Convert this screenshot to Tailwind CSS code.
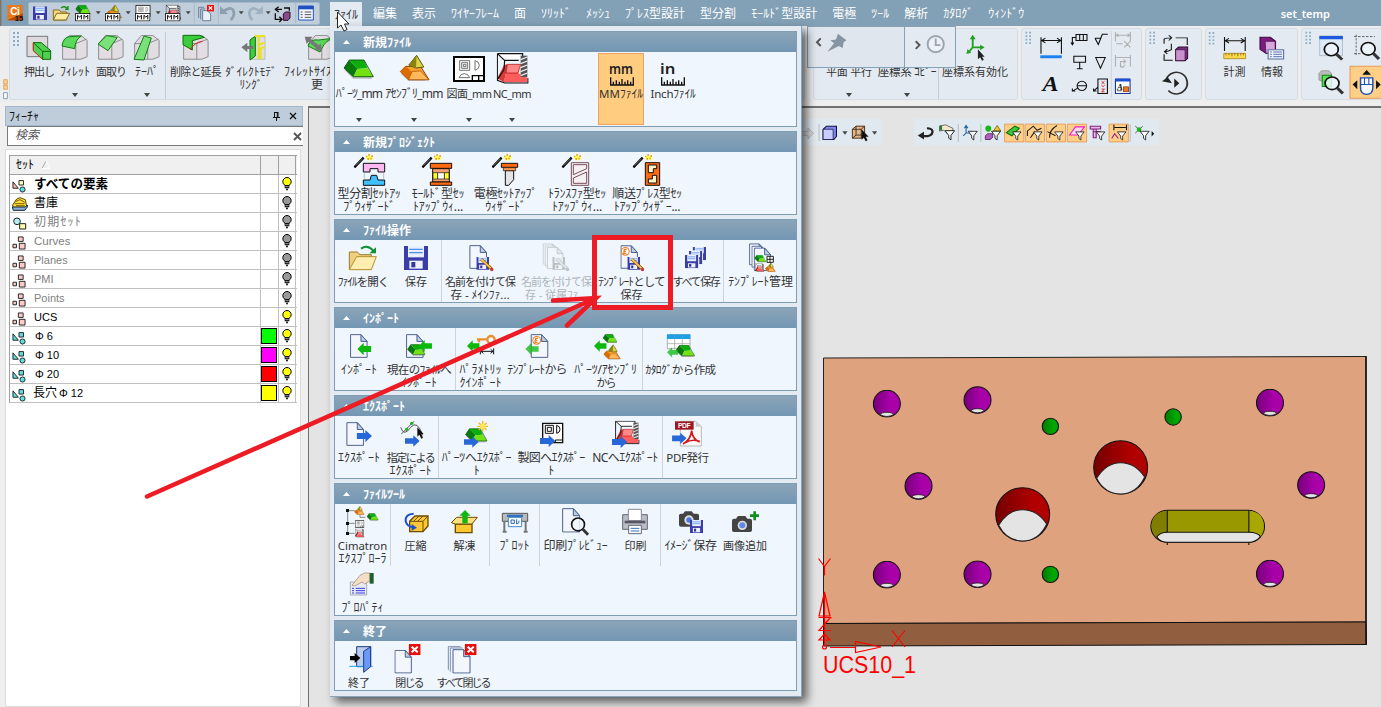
<!DOCTYPE html>
<html lang="ja">
<head>
<meta charset="utf-8">
<title>set_temp</title>
<script src="https://cdn.jsdelivr.net/npm/@tailwindcss/browser@4"></script>
</head>
<body class="relative flex h-[707px] w-[1381px] flex-col overflow-hidden bg-[#efefef] font-['Noto_Sans','Noto_Sans_CJK_JP',sans-serif] text-[12px] leading-[13px] text-[#333]">

<svg class="absolute h-0 w-0">
  <symbol id="part" viewBox="-2 -2 92 60"><path d="M0 30L28 57H82L88 50" fill="#999" opacity=".6"/><path d="M0 25L16 1 40 27 28 51Z" fill="#067a0a"/><path d="M16 1H60L71 26 40 28Z" fill="#0cae0c"/><path d="M40 28L71 26 88 51H28Z" fill="#73e210"/><path d="M0 25L16 1H60L88 51H28Z" fill="none" stroke="#064d08" stroke-width="2.5"/></symbol>
  <symbol id="asm" viewBox="-2 -2 92 82"><path d="M0 55L24 78H82" fill="#999" opacity=".6"/><path d="M0 50L16 34H62L88 75H25Z" fill="#f8a030" stroke="#8a3c00" stroke-width="3"/><path d="M0 50L16 34 36 52 25 75Z" fill="#dc6c00"/><path d="M36 50L62 48 88 75H25Z" fill="#ffb95a" stroke="#a04c00" stroke-width="2"/><path d="M50 0L26 30 48 39 72 36Z" fill="#ddd34a" stroke="#5a5200" stroke-width="3"/><path d="M50 0L26 30 48 39Z" fill="#8c8410"/></symbol>
  <symbol id="drawing" viewBox="0 0 96 78"><path d="M3 3H93V75H3Z" fill="#fff" stroke="#000" stroke-width="6"/><path d="M20 14H50V43H20ZM26 20H44V37H26ZM31 25H39V32H31ZM66 14V43Q80 38 79 28 78 16 66 14ZM18 65Q22 53 34 53 46 53 50 65Z" fill="none" stroke="#555" stroke-width="2.5"/><path d="M58 75V59H93M77 59V75" fill="none" stroke="#000" stroke-width="4"/></symbol>
  <symbol id="nc" viewBox="0 0 96 94"><path d="M2 76L22 36 32 34 28 60 22 88Z" fill="#d83838"/><path d="M28 60L64 60 92 74V88H20Z" fill="#ff5c5c"/><path d="M32 34H72L64 60H28Z" fill="#ff8888" stroke="#a00" stroke-width="2"/><path d="M2 2H72L66 22H24Z" fill="#fff"/><path d="M2 2H78V20M2 2V82L24 90H94V75M2 2L24 22H66M24 22L22 50 2 80" fill="none" stroke="#111" stroke-width="3.5"/><rect x="72" y="8" width="20" height="64" fill="#555"/><path d="M72 20L92 12M72 32L92 24M72 44L92 36M72 56L92 48M72 68L92 60" stroke="#eee" stroke-width="4"/></symbol>
  <symbol id="page" viewBox="0 0 56 74"><path d="M2 2H34L53 23V72H2Z" fill="#f3f7fd" stroke="#4a5f8a" stroke-width="3"/><path d="M34 2V23H53Z" fill="#b9cce8" stroke="#4a5f8a" stroke-width="3"/></symbol>
  <symbol id="gleft" viewBox="0 0 42 38"><path d="M0 19L19 0V10H42V28H19V38Z" fill="#0cb80c"/></symbol>
  <symbol id="bright" viewBox="0 0 46 36"><path d="M46 18L26 0V9H0V27H26V36Z" fill="#2767d8"/></symbol>
  <symbol id="floppy" viewBox="0 0 72 72"><path d="M0 0H72V72H0Z" fill="#3a3da8"/><path d="M12 0H60V34H12Z" fill="#e8f0ff"/><path d="M16 10H56M16 20H56" stroke="#4d8be8" stroke-width="4"/><path d="M16 44H56V68H16Z" fill="#eef0fa"/><path d="M22 48H34V64H22Z" fill="#34389c"/></symbol>
  <symbol id="pencil" viewBox="0 0 44 44"><path d="M3 3L37 35" stroke="#7a4a00" stroke-width="10"/><path d="M3 3L35 33" stroke="#ffc24a" stroke-width="6"/><circle cx="38" cy="37" r="6" fill="#c43a3a"/></symbol>
  <symbol id="wand" viewBox="0 0 64 46"><path d="M2 42L30 13" stroke="#000" stroke-width="7"/><path d="M6 37L27 16" stroke="#eee" stroke-width="1.5"/><path d="M36 8l5 3 4-7 4 5 7-4-1 7 6 2-5 3-1 5-6-3-5 3-3-5-5-3z" fill="#ff5"/><path d="M37 7h4v4h-4zM44 2h5v5h-5zM53 6h5v5h-5zM41 14h5v5h-5zM50 13h5v5h-5z" fill="#f2a01c"/></symbol>
  <symbol id="badge" viewBox="0 0 28 28"><circle cx="14" cy="14" r="13" fill="#ee7d20"/><circle cx="14" cy="14" r="10" fill="#fff"/><path d="M18 8H11L9 20H17M10 14H16" fill="none" stroke="#ee7d20" stroke-width="3.5"/></symbol>
  <symbol id="xbox" viewBox="0 0 36 34"><path d="M0 0H36V34H0Z" fill="#e8100c"/><path d="M9 8L27 25M27 8L9 25" stroke="#fff" stroke-width="6"/></symbol>
  <symbol id="glass" viewBox="0 0 62 62"><circle cx="26" cy="25" r="20" fill="#eef4fb" fill-opacity=".85" stroke="#111" stroke-width="5"/><path d="M41 40L57 57" stroke="#333" stroke-width="9"/></symbol>
  <symbol id="bulb0" viewBox="0 0 30 42"><circle cx="15" cy="14" r="12.5" fill="#999" stroke="#000" stroke-width="3"/><path d="M8 24H22V34H18V40H12V34H8Z" fill="#111"/><path d="M10 29H20M12 35H18" stroke="#ddd" stroke-width="2"/></symbol>
  <symbol id="bulb1" viewBox="0 0 30 42"><circle cx="15" cy="14" r="12.5" fill="#ff0" stroke="#000" stroke-width="3"/><path d="M8 24H22V34H18V40H12V34H8Z" fill="#111"/><path d="M10 29H20M12 35H18" stroke="#ddd" stroke-width="2"/></symbol>
  <symbol id="setc" viewBox="0 0 44 42"><path d="M3 8V28H20Z" fill="#5fe0e0" stroke="#222" stroke-width="3"/><path d="M22 4H36V18H22Z" fill="#5fe0e0" stroke="#222" stroke-width="3"/><circle cx="33" cy="32" r="8" fill="#5fe0e0" stroke="#222" stroke-width="3"/></symbol>
  <symbol id="seta" viewBox="0 0 44 42"><path d="M3 8V28H20Z" fill="#ffb4b4" stroke="#222" stroke-width="3"/><path d="M22 4H36V18H22Z" fill="#ffffc0" stroke="#222" stroke-width="3"/><circle cx="33" cy="32" r="8" fill="#5fe0e0" stroke="#222" stroke-width="3"/></symbol>
  <symbol id="setp" viewBox="0 0 44 44"><path d="M20 3H35V17H20ZM3 26H14V37H3ZM23 23H41V41H23Z" fill="#ffcaca" stroke="#222" stroke-width="3"/></symbol>
  <symbol id="funnel" viewBox="0 0 30 34"><path d="M2 3H28L18 17V30L12 25V17Z" fill="#fff" stroke="#111" stroke-width="2.5"/></symbol>
  <symbol id="grip" viewBox="0 0 18 42"><path d="M0 0h6v6H0zM12 0h6v6h-6zM0 12h6v6H0zM12 12h6v6h-6zM0 24h6v6H0zM12 24h6v6h-6zM0 36h6v6H0zM12 36h6v6h-6z" fill="#8cacc4"/></symbol>
  <symbol id="mmtag" viewBox="0 0 48 26"><path d="M1 1H47V25H1Z" fill="#fff" stroke="#000" stroke-width="3"/><path d="M8 20V7L14 13 20 7V20M28 20V7L34 13 40 7V20" fill="none" stroke="#000" stroke-width="3"/></symbol>
  <symbol id="cube" viewBox="0 0 84 80"><path d="M2 28L24 2H60L80 18V70L60 78H2Z" fill="#e2dde2" stroke="#888" stroke-width="3"/><path d="M2 28H44V78M44 28L78 14" fill="none" stroke="#888" stroke-width="3"/></symbol>
  <linearGradient id="pg"><stop offset="0" stop-color="#77007b"/><stop offset=".65" stop-color="#aa00aa"/></linearGradient>
  <linearGradient id="rg"><stop offset="0" stop-color="#740000"/><stop offset=".7" stop-color="#b00000"/></linearGradient>
  <linearGradient id="gg"><stop offset="0" stop-color="#007a00"/><stop offset=".7" stop-color="#00a800"/></linearGradient>
  <symbol id="hole" viewBox="0 0 80 84" preserveAspectRatio="none"><ellipse cx="40" cy="42" rx="37" ry="40" fill="url(#pg)" stroke="#111" stroke-width="3"/><path d="M22 75Q24 68 40 68 56 68 58 75 40 86 22 75Z" fill="#e4e4e4" stroke="#222" stroke-width="2.5"/></symbol>
  <symbol id="bore" viewBox="0 0 156 168" preserveAspectRatio="none"><ellipse cx="78" cy="84" rx="74" ry="80" fill="url(#rg)" stroke="#111" stroke-width="3"/><path d="M12 117Q38 70 78 70 118 70 144 113Q122 164 78 164 34 164 12 117Z" fill="#e4e4e4" stroke="#222" stroke-width="3"/></symbol>
  <symbol id="pin" viewBox="0 0 50 54" preserveAspectRatio="none"><ellipse cx="25" cy="27" rx="22.500" ry="24.500" fill="url(#gg)" stroke="#111" stroke-width="3"/></symbol>
</svg>

<!-- title bar -->
<header class="flex h-[26px] w-full shrink-0 items-center bg-[#82a0b6] text-white">
  <svg class="h-[26px] w-7 shrink-0" viewBox="0 0 84 78"><rect width="4" height="78" fill="#7f7462"/><rect x="22" y="15" width="46" height="46" fill="#e87a1c"/><path d="M22 61L68 40V61Z" fill="#b04808"/><text x="31" y="44" font-size="30" font-weight="bold" fill="#fff" font-family="Liberation Sans" textLength="28">Ci</text><text x="44" y="63" font-size="23" font-weight="bold" fill="#111" font-family="Liberation Sans" textLength="26">15</text></svg>
  <div class="flex h-[23px] w-[292px] shrink-0 items-center rounded-[2px] border border-[#a4b8ca] bg-[#c0cddb] pl-px">
    <svg class="h-[22px] w-5 shrink-0" viewBox="90 12 60 66"><use href="#floppy" x="99" y="25" width="42" height="42"/></svg>
    <svg class="h-[22px] w-[21px] shrink-0" viewBox="150 12 63 66"><path d="M160 66V36H178L183 42H200V66Z" fill="#f6d77a" stroke="#8a6b1c" stroke-width="3"/><path d="M160 66L170 46H209L198 66Z" fill="#ffeaa0" stroke="#8a6b1c" stroke-width="3"/><path d="M183 30Q194 22 202 32M204 24V34H195" fill="none" stroke="#189018" stroke-width="4"/></svg>
    <svg class="h-[22px] w-8 shrink-0" viewBox="213 12 96 66"><use href="#part" x="226" y="20" width="46" height="30"/><use href="#mmtag" x="225" y="45" width="46" height="25"/><path d="M287 40H302L294.500 49Z" fill="#444"/></svg>
    <svg class="h-[22px] w-[30px] shrink-0" viewBox="309 12 90 66"><use href="#asm" x="318" y="20" width="48" height="42"/><use href="#mmtag" x="315" y="45" width="46" height="25"/><path d="M377 40H392L384.500 49Z" fill="#444"/></svg>
    <svg class="h-[22px] w-[30px] shrink-0" viewBox="399 12 90 66"><use href="#drawing" x="406" y="20" width="46" height="38"/><use href="#mmtag" x="405" y="45" width="46" height="25"/><path d="M467 40H482L474.500 49Z" fill="#444"/></svg>
    <svg class="h-[22px] w-[30px] shrink-0" viewBox="489 12 90 66"><use href="#nc" x="497" y="20" width="46" height="46"/><use href="#mmtag" x="495" y="45" width="46" height="25"/><path d="M557 40H572L564.500 49Z" fill="#444"/></svg>
    <svg class="h-[22px] w-6 shrink-0" viewBox="579 12 72 66"><path d="M583 14V76" stroke="#9fb0c0" stroke-width="2"/><path d="M596 60V28H612M602 64V33H616" fill="none" stroke="#6d8199" stroke-width="3"/><path d="M608 38H622L632 48V68H608Z" fill="#eaf0f8" stroke="#6d8199" stroke-width="3"/><use href="#xbox" x="621" y="20" width="21" height="21"/></svg>
    <svg class="h-[22px] w-7 shrink-0" viewBox="651 12 84 66"><path d="M655 14V76" stroke="#9fb0c0" stroke-width="2"/><path d="M670 40Q700 20 702 46 702 58 692 66" fill="none" stroke="#8d9eb0" stroke-width="8"/><path d="M660 24V48H684Z" fill="#8d9eb0"/><path d="M716 40H731L723.500 49Z" fill="#444"/></svg>
    <svg class="h-[22px] w-7 shrink-0" viewBox="735 12 84 66"><path d="M781 40Q751 20 748 46 748 58 757 66" fill="none" stroke="#9fb0c0" stroke-width="8"/><path d="M789 24V48H765Z" fill="#9fb0c0"/><path d="M797 40H812L804.500 49Z" fill="#444"/></svg>
    <svg class="h-[22px] w-[22px] shrink-0" viewBox="819 12 66 66"><path d="M826 34H846M836 26L826 34 836 42M852 30H868V38M826 46V64H844M838 56L846 64 838 72" fill="none" stroke="#111" stroke-width="4"/><path d="M850 48L856 42H870V60L864 67H850Z" fill="#8a4a8a" stroke="#301030" stroke-width="3"/></svg>
    <svg class="h-[22px] w-[22px] shrink-0" viewBox="885 12 66 66"><path d="M887 14V76" stroke="#9fb0c0" stroke-width="2"/><path d="M896 24H940V66H896Z" fill="#f4f8ff" stroke="#2050c0" stroke-width="3"/><path d="M896 24H940V34H896Z" fill="#2050c0"/><path d="M902 42h6M914 42h20M902 50h6M914 50h20M902 58h6M914 58h20" stroke="#555" stroke-width="3"/></svg>
  </div>
  <nav class="ml-[10px] flex h-full items-center whitespace-nowrap">
    <div class="flex h-6 w-8 items-center justify-center self-end bg-[#e3eaf1] text-[#333]">ﾌｧｲﾙ</div>
    <span class="ml-[11px]">編集</span><span class="ml-[15px]">表示</span><span class="ml-[15px]">ﾜｲﾔｰﾌﾚｰﾑ</span><span class="ml-[15px]">面</span><span class="ml-[15px]">ｿﾘｯﾄﾞ</span><span class="ml-[15px]">ﾒｯｼｭ</span><span class="ml-[15px]">ﾌﾟﾚｽ型設計</span><span class="ml-[15px]">型分割</span><span class="ml-[15px]">ﾓｰﾙﾄﾞ型設計</span><span class="ml-[15px]">電極</span><span class="ml-[15px]">ﾂｰﾙ</span><span class="ml-[15px]">解析</span><span class="ml-[15px]">ｶﾀﾛｸﾞ</span><span class="ml-[15px]">ｳｨﾝﾄﾞｳ</span>
  </nav>
  <span class="mr-[51px] ml-auto text-[11px] font-semibold">set_temp</span>
</header>

<!-- ribbon -->
<div class="flex h-[76px] shrink-0 bg-[#ededee]">
  <div class="flex w-[807px] shrink-0 pt-[2px] pl-[2px]">
    <svg class="h-[74px] w-[7px]" viewBox="6 84 21 222"><path d="M11 239H22V252H11ZM11 255H22V268H11Z" fill="#ffd090" stroke="#d09040" stroke-width="2"/><path d="M11 278H22V296H11Z" fill="#fff" stroke="#7f9db5" stroke-width="3"/></svg>
    <div class="flex h-[72px] w-[796px] rounded-[3px] border border-[#d6dce2] bg-[#e3eaf1] pt-[3px] text-center whitespace-nowrap">
      <svg class="h-[14px] w-[11px] shrink-0 pl-[3px]" viewBox="0 0 18 42" preserveAspectRatio="xMinYMin"><use href="#grip" width="18" height="42"/></svg>
      <div class="flex w-9 shrink-0 flex-col items-center"><svg class="mb-px h-8 w-9" viewBox="63 96 108 96"><path d="M81 109H143V170H81Z" fill="#ddd9dd" stroke="#777" stroke-width="3"/><path d="M100 128H125V150L151 176H128L100 152Z" fill="#24b024"/><path d="M100 128H124L152 152V178H128L100 152Z" fill="#50cf50" stroke="#0a6c0a" stroke-width="3"/><path d="M100 128L128 154H152M128 154V178" fill="none" stroke="#0a6c0a" stroke-width="3"/><path d="M100 128V152L128 178" fill="none" stroke="#e03030" stroke-width="3"/></svg><span class="text-[11px] tracking-[-1px]">押出し</span></div>
      <div class="flex w-9 shrink-0 flex-col items-center"><svg class="mb-px h-8 w-9" viewBox="171 96 108 96"><use href="#cube" x="186" y="104" width="79" height="76"/><path d="M186 138Q190 110 210 110L244 108Q226 118 224 146Z" fill="#5cd95c" stroke="#108010" stroke-width="3"/></svg>ﾌｨﾚｯﾄ<svg class="mt-[15px] h-1 w-[6px]" viewBox="0 0 6 4"><path d="M0 0H6L3 4Z" fill="#444"/></svg></div>
      <div class="flex w-9 shrink-0 flex-col items-center"><svg class="mb-px h-8 w-9" viewBox="279 96 108 96"><use href="#cube" x="294" y="104" width="79" height="76"/><path d="M294 132L320 107 352 112 324 152Z" fill="#7ae07a" stroke="#108010" stroke-width="3"/></svg><span class="text-[11px] tracking-[-1px]">面取り</span></div>
      <div class="flex w-9 shrink-0 flex-col items-center"><svg class="mb-px h-8 w-9" viewBox="387 96 108 96"><use href="#cube" x="402" y="104" width="79" height="76"/><path d="M402 178L432 108 454 114 432 180Z" fill="#7ae07a" stroke="#108010" stroke-width="3"/></svg>ﾃｰﾊﾟ<svg class="mt-[15px] h-1 w-[6px]" viewBox="0 0 6 4"><path d="M0 0H6L3 4Z" fill="#444"/></svg></div>
      <div class="flex w-[60px] shrink-0 flex-col items-center border-l border-[#c4ccd4]"><svg class="mb-px h-8 w-[60px]" viewBox="495 96 180 96"><use href="#cube" x="546" y="104" width="79" height="76"/><path d="M546 106H596L610 112 574 122V150L546 134Z" fill="#3ccc3c" stroke="#0c700c" stroke-width="3"/><path d="M568 150Q578 128 604 124" fill="none" stroke="#d02020" stroke-width="3"/></svg><span class="text-[11px] tracking-[-0.8px]">削除と延長</span></div>
      <div class="flex w-[52px] shrink-0 flex-col items-center"><svg class="mb-px h-8 w-[52px]" viewBox="675 96 156 96"><path d="M764 110H795V178H752V122Z" fill="#e2dde2" stroke="#aaa" stroke-width="2"/><path d="M750 120L766 108V168L750 180Z" fill="#40cc40" stroke="#0c700c" stroke-width="3"/><path d="M776 110V134L795 128M776 134V178M795 140L782 146V178M764 108H795" fill="none" stroke="#e8e020" stroke-width="6"/><path d="M724 142L742 128V138H760V147H742V157Z" fill="#777"/></svg><span class="text-[11.5px]">ﾀﾞｲﾚｸﾄﾓﾃﾞ<br>ﾘﾝｸﾞ</span></div>
      <div class="flex w-20 shrink-0 flex-col items-center"><svg class="mb-px h-8 w-20" viewBox="831 96 240 96"><use href="#cube" x="924" y="104" width="79" height="76"/><path d="M924 138Q930 116 956 120L990 116Q970 130 960 156Z" fill="#5cd95c" stroke="#108010" stroke-width="3"/><path d="M914 110H938L932 117 956 136 962 130 966 152 942 150 948 144 926 125 920 132Z" fill="#777"/></svg>ﾌｨﾚｯﾄｻｲｽﾞ変<br>更</div>
    </div>
  </div>
  <div class="flex gap-[3px] pt-[2px] pl-[6px]">
    <div class="flex h-[72px] w-[205px] rounded-[3px] border border-[#d6dce2] bg-[#e3eaf1] pt-[3px] pl-2 text-center whitespace-nowrap">
      <div class="flex w-[54px] flex-col items-center pt-[33px]"><span class="text-[11px] tracking-[-0.2px]">平面 平行</span><svg class="mt-[15px] h-1 w-[6px]" viewBox="0 0 6 4"><path d="M0 0H6L3 4Z" fill="#444"/></svg></div>
      <div class="flex w-[62px] flex-col items-center pt-[33px]"><span class="text-[11.5px] tracking-[-0.3px]">座標系 ｺﾋﾟｰ</span><svg class="mt-[15px] h-1 w-[6px]" viewBox="0 0 6 4"><path d="M0 0H6L3 4Z" fill="#444"/></svg></div>
      <div class="flex w-[73px] flex-col items-center border-l border-[#c4ccd4]"><svg class="mb-px h-8 w-[73px]" viewBox="373 96 197 96" preserveAspectRatio="none"><path d="M464 112V142L452 158M464 142H490" fill="none" stroke="#22a022" stroke-width="5"/><path d="M464 104L456 118H472ZM496 142L484 134V151ZM447 162L450 147 460 158Z" fill="#22a022"/><path d="M478 148V178L484 172 489 182 494 179 489 170H496Z" fill="#222"/></svg><span class="text-[11px]">座標系有効化</span></div>
    </div>
    <svg class="h-[72px] w-[121px] rounded-[3px] border border-[#d6dce2] bg-[#e3eaf1]" viewBox="598 87 326 213" preserveAspectRatio="none">
      <use href="#grip" x="607" y="93" width="16" height="42"/>
      <path d="M650 112V162M706 112V162M652 122H704M662 115L652 122 662 129M694 115L704 122 694 129" fill="none" stroke="#111" stroke-width="3"/><rect x="648" y="167" width="59" height="9" fill="#1c80f0"/>
      <text x="654" y="276" font-size="66" font-style="italic" font-weight="bold" font-family="Liberation Serif" fill="#111" textLength="44" lengthAdjust="spacingAndGlyphs">A</text>
      <path d="M746 104H776V122H746ZM756 104V122M766 104V122M746 113H736V134M732 128L736 135 740 128M740 170H772V188H740ZM756 188V208M748 208H764M798 115H814L807 134 798 115M807 134L818 103H833M800 174H826L813 206Z" fill="none" stroke="#111" stroke-width="3"/>
      <path d="M843 94V296" stroke="#c4ccd4" stroke-width="2"/>
      <path d="M854 96V124M895 96V124M856 106H893M862 101L856 106 862 111M887 101L893 106 887 111M856 132H874M878 124L895 143M895 124L878 143M854 166V202M895 166V202M856 174H893M868 204V186H882M876 180L882 186 876 192M880 196L874 204 866 198" fill="none" stroke="#b0b0b0" stroke-width="3"/>
      <ellipse cx="762" cy="260" rx="13" ry="14" fill="none" stroke="#111" stroke-width="3"/><path d="M750 260H774M752 266L736 276M736 268V276H744M806 239H832V283H806ZM806 264L794 276M794 268V276H802" fill="none" stroke="#111" stroke-width="3"/><path d="M816 246L824 254M824 246L816 254M816 258l4 5 4-5M816 270h8l-8 8h8" stroke="#d02020" fill="none" stroke-width="2.500"/>
      <path d="M854 240H894V283H854Z" fill="#fff" stroke="#1838a0" stroke-width="3"/><path d="M854 238H894V247H854Z" fill="#1c50d0"/><text x="858" y="272" font-size="24" font-style="italic" font-weight="bold" font-family="Liberation Serif" fill="#111">A</text><path d="M858 275H872" stroke="#111" stroke-width="2"/><rect x="876" y="263" width="14" height="15" fill="#f07820" stroke="#803000" stroke-width="2"/>
    </svg>
    <svg class="h-[72px] w-[57px] rounded-[3px] border border-[#d6dce2] bg-[#e3eaf1]" viewBox="932 87 152 213" preserveAspectRatio="none">
      <use href="#grip" x="941" y="93" width="16" height="42"/>
      <path d="M982 132V118Q986 114 1002 114M995 106L1003 114 995 122M1014 114H1046V136M982 164V182H1006M1002 132V150Q996 156 984 156M991 148L983 156 991 163" fill="none" stroke="#111" stroke-width="3"/>
      <path d="M1014 150L1022 142H1047V176L1040 184H1014Z" fill="#7c2c80" stroke="#301030" stroke-width="3"/><path d="M1014 150H1040V183H1014Z" fill="#c890cc" stroke="#301030" stroke-width="2"/>
      <path d="M988 240A30 33 0 1 1 994 274" fill="none" stroke="#333" stroke-width="5"/><path d="M976 246L992 234 1004 252ZM1010 238L1024 252 1010 266Z" fill="#222"/>
    </svg>
    <div class="flex h-[72px] w-[93px] rounded-[3px] border border-[#d6dce2] bg-[#e3eaf1] pt-[3px] text-center text-[11px]">
      <svg class="h-8 w-[10px]" viewBox="1094 96 27 96" preserveAspectRatio="none"><use href="#grip" x="1101" y="94" width="16" height="42"/></svg>
      <div class="flex w-[37px] flex-col items-center"><svg class="mb-px h-8 w-[37px]" viewBox="1121 96 100 96" preserveAspectRatio="none"><path d="M1144 111V153M1200 111V153M1146 122H1198M1156 115L1146 122 1156 129M1188 115L1198 122 1188 129" fill="none" stroke="#111" stroke-width="3"/><path d="M1142 160H1201V176H1142Z" fill="#ffd84a" stroke="#a07810" stroke-width="2"/><path d="M1148 160v6M1156 160v6M1164 160v9M1172 160v6M1180 160v9M1188 160v6M1195 160v6" stroke="#604808" stroke-width="2"/></svg>計測</div>
      <div class="flex w-[38px] flex-col items-center"><svg class="mb-px h-8 w-[38px]" viewBox="1221 96 103 96" preserveAspectRatio="none"><path d="M1240 112H1268L1282 124V160H1256L1240 148Z" fill="#7c1c80" stroke="#400840" stroke-width="3"/><path d="M1254 124H1281V160H1256Z" fill="#d8a8dc" stroke="#400840" stroke-width="2"/><path d="M1262 149H1304V177H1262Z" fill="#eef2fc" stroke="#5c6fa0" stroke-width="3"/><path d="M1267 156h5M1276 156h24M1267 163h5M1276 163h24M1267 170h5M1276 170h24" stroke="#4c5fa8" stroke-width="2.500"/></svg>情報</div>
    </div>
    <svg class="h-[72px] w-[84px] shrink-0 rounded-[3px] border border-[#d6dce2] bg-[#e3eaf1]" viewBox="1350 87 227 213" preserveAspectRatio="none">
      <use href="#grip" x="1359" y="93" width="16" height="42"/>
      <path d="M1399 108H1462V168H1399Z" fill="#dfeaf8" stroke="#9ab" stroke-width="2"/><path d="M1398 108H1463V118H1398Z" fill="#1c58e0"/><use href="#glass" x="1406" y="122" width="60" height="66"/>
      <path d="M1500 104V166M1494 110H1552M1494 162H1515" fill="none" stroke="#555" stroke-width="2.500" stroke-dasharray="7 4"/><use href="#glass" x="1508" y="120" width="60" height="66"/>
      <path d="M1397 222L1404 214H1424L1432 222V246L1422 252 1397 242Z" fill="#bbb" stroke="#888" stroke-width="2"/><path d="M1406 228H1432V262H1406Z" fill="#5ce05c" stroke="#0c8c0c" stroke-width="3"/><use href="#glass" x="1408" y="226" width="60" height="64"/>
      <path d="M1483 200H1580V298H1483Z" fill="#ffcf87" stroke="#e89a54" stroke-width="3"/><path d="M1512 236H1546V266Q1546 286 1529 286 1512 286 1512 266Z" fill="#f4f8ff" stroke="#2050b0" stroke-width="4"/><path d="M1512 256H1546M1523 236V256M1535 236V256" stroke="#2050b0" stroke-width="3"/><path d="M1529 212L1541 226H1517ZM1490 256L1503 243V270ZM1568 256L1555 243V270Z" fill="#111"/>
    </svg>
  </div>
</div>

<main class="flex min-h-0 flex-1 gap-[5px]">
  <!-- feature tree -->
  <aside class="flex w-[303px] shrink-0 flex-col pt-1 pl-[5px]">
    <div class="flex h-5 shrink-0 items-center border border-[#a3b8cc] bg-[#bfcddb] pl-[3px] text-[#111]">ﾌｨｰﾁｬ
      <svg class="mr-[9px] ml-auto h-[9px] w-[7px]" viewBox="0 0 7 9"><path d="M1.500 0V5M5 0V5M1.500 .5H5M0 5.500H7M3.500 5V9M4.300 0V5" stroke="#111" fill="none"/></svg>
      <svg class="mr-[5px] h-[8px] w-[8px]" viewBox="0 0 8 8"><path d="M1 1L7 7M7 1L1 7" stroke="#111" stroke-width="1.300"/></svg></div>
    <div class="ml-[2px] flex h-5 shrink-0 items-center border border-r-0 border-[#7a7a7a] bg-white pb-[3px] pl-[7px] text-[#555] italic">検索
      <svg class="mt-[3px] mr-px ml-auto h-[9px] w-[9px]" viewBox="0 0 9 9"><path d="M1 1L8 8M8 1L1 8" stroke="#555" stroke-width="1.800"/></svg></div>
    <div class="mt-[3px] mr-[2px] flex-1 border border-[#dcdcdc] bg-white pt-[5px] pl-[3px] font-['Liberation_Sans','Noto_Sans_CJK_JP',sans-serif] text-[12px] text-black">
      <div class="w-[288px] border-l border-[#a0a0a0]">
        <div class="flex h-5 border-y border-[#a0a0a0] bg-[#f0f0f0]"><div class="flex w-[250px] items-center pl-[6px]">ｾｯﾄ<svg class="ml-2 h-2 w-2" viewBox="0 0 8 8"><path d="M0 7.500L4 0" stroke="#aaa"/><path d="M4 0L8 7.500H0" fill="none" stroke="#fff"/></svg></div><div class="w-[18px] border-l border-[#a0a0a0]"></div><div class="w-[18px] border-x border-[#a0a0a0]"></div></div>
        <div class="flex h-[19px] border-b border-[#c0c0c0]"><div class="flex w-[250px] items-center text-[12.6px] font-bold"><svg class="mt-[3px] mr-[8px] ml-[2px] h-[14px] w-[14px]"><use href="#seta"/></svg>すべての要素</div><div class="w-[18px] border-l border-[#c0c0c0]"></div><div class="flex w-[18px] items-center justify-center border-x border-[#c0c0c0]"><svg class="h-[14px] w-[10px]"><use href="#bulb1"/></svg></div></div>
        <div class="flex h-[19px] border-b border-[#c0c0c0]"><div class="flex w-[250px] items-center"><svg class="mt-[2px] mr-[6px] ml-[2px] h-[14px] w-[16px]" viewBox="0 0 48 42"><path d="M2 24L14 6 24 2 40 8 44 28 38 34H4Z" fill="#ffdc3c" stroke="#5c4800" stroke-width="3"/><path d="M10 14L24 8 38 16M8 20H38M12 26H38" stroke="#806400" stroke-width="3" fill="none"/><path d="M1 30H40L46 24V30L38 40H4Z" fill="#8ab0dc" stroke="#123" stroke-width="3"/></svg>書庫</div><div class="w-[18px] border-l border-[#c0c0c0]"></div><div class="flex w-[18px] items-center justify-center border-x border-[#c0c0c0]"><svg class="h-[14px] w-[10px]"><use href="#bulb0"/></svg></div></div>
        <div class="flex h-[19px] border-b border-[#c0c0c0]"><div class="flex w-[250px] items-center text-[#808080]"><svg class="mt-[3px] mr-[7px] ml-[3px] h-[13px] w-[14px]" viewBox="0 0 42 39"><circle cx="12" cy="13" r="10" fill="#b4f0f0" stroke="#222" stroke-width="3"/><path d="M20 20H38V36H20Z" fill="#ffffb0" stroke="#222" stroke-width="3"/></svg><span class="tracking-[1.2px]">初期ｾｯﾄ</span></div><div class="w-[18px] border-l border-[#c0c0c0]"></div><div class="flex w-[18px] items-center justify-center border-x border-[#c0c0c0]"><svg class="h-[14px] w-[10px]"><use href="#bulb0"/></svg></div></div>
        <div class="flex h-[19px] border-b border-[#c0c0c0]"><div class="flex w-[250px] items-center text-[11.5px] text-[#808080]"><svg class="mt-[3px] mr-[8px] ml-[2px] h-[14px] w-[14px]"><use href="#setp"/></svg>Curves</div><div class="w-[18px] border-l border-[#c0c0c0]"></div><div class="flex w-[18px] items-center justify-center border-x border-[#c0c0c0]"><svg class="h-[14px] w-[10px]"><use href="#bulb0"/></svg></div></div>
        <div class="flex h-[19px] border-b border-[#c0c0c0]"><div class="flex w-[250px] items-center text-[11px] text-[#808080]"><svg class="mt-[3px] mr-[8px] ml-[2px] h-[14px] w-[14px]"><use href="#setp"/></svg>Planes</div><div class="w-[18px] border-l border-[#c0c0c0]"></div><div class="flex w-[18px] items-center justify-center border-x border-[#c0c0c0]"><svg class="h-[14px] w-[10px]"><use href="#bulb0"/></svg></div></div>
        <div class="flex h-[19px] border-b border-[#c0c0c0]"><div class="flex w-[250px] items-center text-[11px] text-[#808080]"><svg class="mt-[3px] mr-[8px] ml-[2px] h-[14px] w-[14px]"><use href="#setp"/></svg>PMI</div><div class="w-[18px] border-l border-[#c0c0c0]"></div><div class="flex w-[18px] items-center justify-center border-x border-[#c0c0c0]"><svg class="h-[14px] w-[10px]"><use href="#bulb0"/></svg></div></div>
        <div class="flex h-[19px] border-b border-[#c0c0c0]"><div class="flex w-[250px] items-center text-[11px] text-[#808080]"><svg class="mt-[3px] mr-[8px] ml-[2px] h-[14px] w-[14px]"><use href="#setp"/></svg>Points</div><div class="w-[18px] border-l border-[#c0c0c0]"></div><div class="flex w-[18px] items-center justify-center border-x border-[#c0c0c0]"><svg class="h-[14px] w-[10px]"><use href="#bulb0"/></svg></div></div>
        <div class="flex h-[19px] border-b border-[#c0c0c0]"><div class="flex w-[250px] items-center text-[11px]"><svg class="mt-[3px] mr-[8px] ml-[2px] h-[14px] w-[14px]"><use href="#setp"/></svg>UCS</div><div class="w-[18px] border-l border-[#c0c0c0]"></div><div class="flex w-[18px] items-center justify-center border-x border-[#c0c0c0]"><svg class="h-[14px] w-[10px]"><use href="#bulb1"/></svg></div></div>
        <div class="flex h-[19px] border-b border-[#c0c0c0]"><div class="flex w-[250px] items-center text-[11px]"><svg class="mt-[3px] mr-[9px] ml-[2px] h-[14px] w-[14px]"><use href="#setc"/></svg>Φ 6</div><div class="w-[18px] border-l border-[#c0c0c0] pt-px"><div class="h-4 w-4 border border-black bg-[#00ff00]"></div></div><div class="flex w-[18px] items-center justify-center border-x border-[#c0c0c0]"><svg class="h-[14px] w-[10px]"><use href="#bulb1"/></svg></div></div>
        <div class="flex h-[19px] border-b border-[#c0c0c0]"><div class="flex w-[250px] items-center text-[11px]"><svg class="mt-[3px] mr-[9px] ml-[2px] h-[14px] w-[14px]"><use href="#setc"/></svg>Φ 10</div><div class="w-[18px] border-l border-[#c0c0c0] pt-px"><div class="h-4 w-4 border border-black bg-[#ff00ff]"></div></div><div class="flex w-[18px] items-center justify-center border-x border-[#c0c0c0]"><svg class="h-[14px] w-[10px]"><use href="#bulb1"/></svg></div></div>
        <div class="flex h-[19px] border-b border-[#c0c0c0]"><div class="flex w-[250px] items-center text-[11px]"><svg class="mt-[3px] mr-[9px] ml-[2px] h-[14px] w-[14px]"><use href="#setc"/></svg>Φ 20</div><div class="w-[18px] border-l border-[#c0c0c0] pt-px"><div class="h-4 w-4 border border-black bg-[#ff0000]"></div></div><div class="flex w-[18px] items-center justify-center border-x border-[#c0c0c0]"><svg class="h-[14px] w-[10px]"><use href="#bulb1"/></svg></div></div>
        <div class="flex h-[19px] border-b border-[#c0c0c0]"><div class="flex w-[250px] items-center"><svg class="mt-[3px] mr-[7px] ml-[2px] h-[14px] w-[14px]"><use href="#setc"/></svg>長穴<span class="ml-[2px] text-[11px]">Φ 12</span></div><div class="w-[18px] border-l border-[#c0c0c0] pt-px"><div class="h-4 w-4 border border-black bg-[#ffff00]"></div></div><div class="flex w-[18px] items-center justify-center border-x border-[#c0c0c0]"><svg class="h-[14px] w-[10px]"><use href="#bulb1"/></svg></div></div>
      </div>
    </div>
  </aside>

  <!-- model view -->
  <section class="mt-[4px] flex flex-1 flex-col border-t-2 border-l border-[#707070] bg-[#e4e4e4]">
    <div class="flex h-[37px] shrink-0 items-end gap-8 pl-[493px]">
      <svg class="h-[26px] w-[80px] rounded-[2px] bg-[#e0e8f0]" viewBox="6 355 216 76" preserveAspectRatio="none"><path d="M8 391H22V381L37 397 22 413V403H8" fill="#d6d6d6" stroke="#aaa" stroke-width="2"/><path d="M52 370V420" stroke="#aaa" stroke-width="2"/><path d="M63 385L72 376H99V406L92 415H63Z" fill="#8088f0" stroke="#101040" stroke-width="3"/><path d="M63 385H90V415H63Z" fill="#c8ccff" stroke="#101040" stroke-width="2"/><path d="M115 391H129L122 401ZM195 391H209L202 401Z" fill="#444"/><path d="M142 385L152 376H175V404L166 411H142ZM142 385H166V411M166 385L175 376M152 376V402H175M142 411L152 402" fill="#e0b890" stroke="#402000" stroke-width="2.500"/><path d="M167 386V416L173 410 178 420 183 417 178 407H186Z" fill="#111"/></svg>
      <svg class="h-[26px] w-[245px] rounded-[2px] bg-[#e0e8f0]" viewBox="307 355 663 76" preserveAspectRatio="none">
        <path d="M330 405H345Q358 402 357 390 355 382 342 382" fill="none" stroke="#222" stroke-width="6"/><path d="M317 403L334 392V415Z" fill="#222"/>
        <path d="M376 376L392 372 412 382V396H396L388 388 376 390Z" fill="#f4e8d0" stroke="#444" stroke-width="2"/><rect x="376" y="374" width="7" height="14" fill="#288028"/><use href="#funnel" x="389" y="386" width="30" height="34"/>
        <path d="M427 370V422M488 370V422M892 370V422" stroke="#aaa" stroke-width="2"/><path d="M448 378V396L440 404M448 396H466M443 382L448 374 453 382M460 390L468 396 460 402" fill="none" stroke="#2468a8" stroke-width="3"/><use href="#funnel" x="451" y="388" width="30" height="32"/>
        <ellipse cx="508" cy="383" rx="8" ry="9" fill="#18b818"/><path d="M532 374L542 390H522Z" fill="#e8c830" stroke="#604c00" stroke-width="2"/><path d="M500 404L506 398H520V408L514 415H500Z" fill="#b060c0" stroke="#401048" stroke-width="2"/><use href="#funnel" x="514" y="388" width="30" height="32"/>
        <g fill="#ffcf87" stroke="#e89a54" stroke-width="2.500"><path d="M552 370H604V422H552ZM608 370H660V422H608ZM665 370H717V422H665ZM722 370H774V422H722ZM835 370H887V422H835Z"/></g>
        <path d="M557 395L580 376 592 382 572 404Z" fill="#40c840" stroke="#0c700c" stroke-width="3"/><path d="M614 405V390L630 376 640 388 652 382M622 410L634 392" fill="none" stroke="#222" stroke-width="3"/><path d="M694 374Q672 388 674 410M668 392L690 404" fill="none" stroke="#222" stroke-width="3"/><path d="M728 402L744 378H768L752 402Z" fill="#ffd8f4" stroke="#f020c0" stroke-width="3"/><path d="M784 376H812V384H784ZM792 384V410H800V384M792 392H812" fill="#e8b8e8" stroke="#802080" stroke-width="3"/><path d="M848 372V388M882 372V388M850 380H880" fill="none" stroke="#111" stroke-width="3"/><path d="M842 412L850 398 860 412" stroke="#902090" stroke-width="3" fill="none"/>
        <use href="#funnel" x="570" y="390" width="30" height="30"/><use href="#funnel" x="627" y="390" width="30" height="30"/><use href="#funnel" x="684" y="390" width="30" height="30"/><use href="#funnel" x="741" y="390" width="30" height="30"/><use href="#funnel" x="797" y="390" width="30" height="30"/><use href="#funnel" x="854" y="390" width="30" height="30"/>
        <path d="M906 376L926 396M926 376L906 396" stroke="#222" stroke-width="2"/><ellipse cx="916" cy="386" rx="6" ry="7" fill="#18b818"/><use href="#funnel" x="914" y="388" width="34" height="32"/><path d="M950 390L957 398 950 406Z" fill="#111"/>
      </svg>
    </div>
    <svg class="ml-[493px] h-[562px] w-[579px]" viewBox="802 145 579 562">
      <path d="M823.500 358L1366 356.500V622L823.500 623.500Z" fill="#dea27e" stroke="#222"/>
      <path d="M823.500 623.500L1366 622 1366.500 644.500 823.500 646Z" fill="#915f40" stroke="#111"/><path d="M1366 356V645" stroke="#111" stroke-width="1.500"/>
      <g transform="translate(810 350) scale(.3642 .3333)">
        <use href="#hole" x="171" y="119" width="80" height="84"/><use href="#hole" x="420" y="108" width="80" height="84"/><use href="#hole" x="1223" y="116" width="80" height="84"/><use href="#hole" x="258" y="366" width="80" height="84"/><use href="#hole" x="1336" y="363" width="80" height="84"/><use href="#hole" x="171" y="632" width="80" height="84"/><use href="#hole" x="420" y="631" width="80" height="84"/><use href="#hole" x="1223" y="629" width="80" height="84"/>
        <use href="#pin" x="635" y="202" width="50" height="54"/><use href="#pin" x="972" y="174" width="50" height="54"/><use href="#pin" x="635" y="646" width="50" height="54"/>
        <use href="#bore" x="775" y="268" width="156" height="168"/><use href="#bore" x="506" y="409" width="156" height="168"/>
        <rect x="936" y="481" width="312" height="96" rx="46" ry="48" fill="#9a9800" stroke="#111" stroke-width="3"/><path d="M981 482Q938 486 938 529 940 550 952 562L981 547Z" fill="#807e00"/><path d="M1205 482Q1246 486 1246 529 1246 550 1236 560L1205 547Z" fill="#a8a600"/>
        <path d="M952 561Q962 547 981 547H1205Q1228 547 1237 560 1224 577 1205 577H981Q962 576 952 561Z" fill="#e4e4e4" stroke="#111" stroke-width="3"/><path d="M981 481V547M1205 481V547M981 577V585M1205 577V585" stroke="#111" stroke-width="3"/>
      </g>
      <g fill="none" stroke="#f00" stroke-width="1.200"><path d="M818.500 558.500L824.500 566.500 830.500 558.500M824.500 566V575.500M824.500 592V644M824.500 592L819 616H830ZM818.500 617.500H830.500L819 630.500H831M824.500 634L819 640H830ZM830 647.500H856M855.500 641.500V652.500L881 647ZM892 630.500L905 647M905 630.500L892 647"/><circle cx="824.500" cy="647" r="2"/></g>
      <text x="823" y="673" font-family="Liberation Sans" font-size="23" fill="#f00" textLength="93" lengthAdjust="spacingAndGlyphs">UCS10_1</text>
    </svg>
  </section>
</main>

<!-- collapsed tool pop-ups -->
<div class="absolute top-[26px] left-[807px] flex h-[42px] w-[149px]">
  <svg class="h-[42px] w-[98px] border border-[#86a2b8] bg-[#dfe6ed]" viewBox="0 0 98 42"><path d="M12 12L8 16 12 20" fill="none" stroke="#555" stroke-width="2"/><path d="M30 7L39 14 36 16 35 22 31 20 19 26 26 17 22 14 28 13Z" fill="#8795a3"/></svg>
  <svg class="-ml-px h-[42px] w-[52px] border border-[#86a2b8] bg-[#e3eaf1]" viewBox="0 0 52 42"><path d="M11 15L15 19 11 23" fill="none" stroke="#555" stroke-width="2"/><circle cx="32" cy="18" r="8.500" fill="#eef2f6" stroke="#9aa5b0" stroke-width="2"/><path d="M32 12V19H37" fill="none" stroke="#9aa5b0" stroke-width="2"/></svg>
</div>

<!-- file menu -->
<div class="absolute top-[26px] left-[330px] flex h-[671px] w-[472px] flex-col gap-1 border-r border-b border-[#86a6c0] bg-[#e3eaf1] px-1 pt-[5px] text-center whitespace-nowrap shadow-[5px_5px_9px_rgba(0,0,0,0.6)] [&_div>svg]:mb-px">
  <section class="flex h-24 w-[463px] flex-col border border-[#7d9db6] bg-[#eff6fd]">
    <h2 class="flex h-5 shrink-0 items-center bg-linear-to-b from-[#8aa4b8] to-[#7397b3] pl-2 font-bold text-white"><svg class="mr-[13px] h-1 w-[7px]" viewBox="0 0 7 4"><path d="M0 4H7L3.500 0Z" fill="#fff"/></svg>新規ﾌｧｲﾙ</h2>
    <div class="flex flex-1">
      <div class="flex w-12 flex-col items-center"><svg class="h-[34px] w-12 shrink-0" viewBox="15 156 144 102"><use href="#part" x="40" y="177" width="92" height="60"/></svg><span class="tracking-[-0.9px]">ﾊﾟｰﾂ_mm</span><svg class="mt-[18px] h-1 w-[6px]" viewBox="0 0 6 4"><path d="M0 0H6L3 4Z" fill="#444"/></svg></div>
      <div class="flex w-[62px] flex-col items-center"><svg class="h-[34px] w-[62px] shrink-0" viewBox="159 156 186 102"><use href="#asm" x="208" y="164" width="92" height="80"/></svg><span class="tracking-[-0.8px]">ｱｾﾝﾌﾞﾘ_mm</span><svg class="mt-[18px] h-1 w-[6px]" viewBox="0 0 6 4"><path d="M0 0H6L3 4Z" fill="#444"/></svg></div>
      <div class="flex w-12 flex-col items-center"><svg class="h-[34px] w-12 shrink-0" viewBox="345 156 144 102"><use href="#drawing" x="369" y="168" width="96" height="78"/></svg><span class="text-[11px] tracking-[-0.5px]">図面_mm</span><svg class="mt-[18px] h-1 w-[6px]" viewBox="0 0 6 4"><path d="M0 0H6L3 4Z" fill="#444"/></svg></div>
      <div class="flex w-[38px] flex-col items-center"><svg class="h-[34px] w-[38px] shrink-0" viewBox="489 156 114 102"><use href="#nc" x="500" y="159" width="96" height="94"/></svg><span class="text-[11px] tracking-[-0.6px]">NC_mm</span><svg class="mt-[18px] h-1 w-[6px]" viewBox="0 0 6 4"><path d="M0 0H6L3 4Z" fill="#444"/></svg></div>
      <div class="mt-px ml-[67px] flex h-[72px] w-[46px] flex-col items-center border border-[#f0a060] bg-[#ffcc80]"><svg class="h-8 w-[46px] shrink-0" viewBox="804 162 138 96"><text x="837" y="222" font-size="42" font-weight="600" font-family="Noto Sans" fill="#222" textLength="72" lengthAdjust="spacingAndGlyphs">mm</text><path d="M842 232V255H910V232M850 255V245M859 255V241M868 255V245M876 255V237M885 255V245M893 255V241M902 255V245" fill="none" stroke="#111" stroke-width="4"/></svg><span class="text-[11.5px]">MMﾌｧｲﾙ</span></div>
      <div class="flex w-[58px] flex-col items-center"><svg class="h-[34px] w-[58px] shrink-0" viewBox="942 156 174 102"><text x="990" y="222" font-size="44" font-weight="600" font-family="Noto Sans" fill="#222" textLength="46" lengthAdjust="spacingAndGlyphs">in</text><path d="M995 232V255H1063V232M1003 255V245M1012 255V241M1021 255V245M1029 255V237M1038 255V245M1046 255V241M1055 255V245" fill="none" stroke="#111" stroke-width="4"/></svg><span class="text-[11.5px] tracking-[-0.2px]">Inchﾌｧｲﾙ</span></div>
    </div>
  </section>

  <section class="flex h-[84px] w-[463px] flex-col border border-[#7d9db6] bg-[#eff6fd]">
    <h2 class="flex h-5 shrink-0 items-center bg-linear-to-b from-[#8aa4b8] to-[#7397b3] pl-2 font-bold text-white"><svg class="mr-[13px] h-1 w-[7px]" viewBox="0 0 7 4"><path d="M0 4H7L3.500 0Z" fill="#fff"/></svg>新規ﾌﾟﾛｼﾞｪｸﾄ</h2>
    <div class="flex flex-1">
      <div class="flex w-[68px] flex-col items-center"><svg class="h-[34px] w-[68px] shrink-0" viewBox="15 66 204 102"><use href="#wand" x="71" y="70" width="64" height="46"/><path d="M100 100H164V126H144V116H120V126H100Z" fill="#ffb8f0" stroke="#111" stroke-width="3"/><path d="M103 130V146M161 130V146" stroke="#bbb" stroke-width="3"/><path d="M100 166H164V150H144L140 136H124L120 150H100Z" fill="#40c0ff" stroke="#111" stroke-width="3"/></svg><span class="tracking-[-0.4px]">型分割ｾｯﾄｱｯ<br>ﾌﾟｳｨｻﾞｰﾄﾞ</span></div>
      <div class="flex w-[70px] flex-col items-center"><svg class="h-[34px] w-[70px] shrink-0" viewBox="219 66 210 102"><use href="#wand" x="275" y="70" width="64" height="46"/><path d="M308 116H358V156H308Z" fill="#f8a070" stroke="#111" stroke-width="3"/><path d="M309 128H323V147H309ZM343 128H357V147H343Z" fill="#ff2" stroke="#111" stroke-width="2"/><path d="M323 128H343V147H323Z" fill="#fff" stroke="#111" stroke-width="2"/><path d="M301 100H365V115H301ZM301 156H365V166H301Z" fill="#ff6a10" stroke="#111" stroke-width="3"/></svg><span class="tracking-[-0.2px]">ﾓｰﾙﾄﾞ型ｾｯ<br>ﾄｱｯﾌﾟｳｨ...</span></div>
      <div class="flex w-[65px] flex-col items-center"><svg class="h-[34px] w-[65px] shrink-0" viewBox="429 66 195 102"><use href="#wand" x="485" y="70" width="64" height="46"/><path d="M526 122H551V149L536 166H526Z" fill="#e4e4e4" stroke="#111" stroke-width="3"/><path d="M514 100H563V112H514Z" fill="#ff6a10" stroke="#111" stroke-width="3"/><path d="M520 113H557V122H520Z" fill="#ff9a50" stroke="#111" stroke-width="2"/></svg><span class="tracking-[-0.3px]">電極ｾｯﾄｱｯﾌﾟ<br>ｳｨｻﾞｰﾄﾞ</span></div>
      <div class="flex w-[78px] flex-col items-center"><svg class="h-[34px] w-[78px] shrink-0" viewBox="624 66 234 102"><use href="#wand" x="695" y="70" width="64" height="46"/><path d="M724 98H776V166H724ZM730 104H770V116L730 134ZM730 144L770 126V160H730Z" fill="#f4f0f4" stroke="#7a5058" stroke-width="3"/></svg><span class="tracking-[-0.2px]">ﾄﾗﾝｽﾌｧ型ｾｯ<br>ﾄｱｯﾌﾟｳｨ...</span></div>
      <div class="flex w-[62px] flex-col items-center"><svg class="h-[34px] w-[62px] shrink-0" viewBox="858 66 186 102"><use href="#wand" x="908" y="70" width="64" height="46"/><path d="M946 98H989V166H946Z" fill="#ff6a10" stroke="#111" stroke-width="3"/><path d="M955 105H980V116H970V128H955ZM980 136V159H955V147H967V136Z" fill="#fff4c8" stroke="#111" stroke-width="3"/></svg><span class="tracking-[-0.3px]">順送ﾌﾟﾚｽ型ｾｯ<br>ﾄｱｯﾌﾟｳｨｻﾞｰ...</span></div>
    </div>
  </section>

  <section class="flex h-[84px] w-[463px] flex-col border border-[#7d9db6] bg-[#eff6fd]">
    <h2 class="flex h-5 shrink-0 items-center bg-linear-to-b from-[#8aa4b8] to-[#7397b3] pl-2 font-bold text-white"><svg class="mr-[13px] h-1 w-[7px]" viewBox="0 0 7 4"><path d="M0 4H7L3.500 0Z" fill="#fff"/></svg>ﾌｧｲﾙ操作</h2>
    <div class="flex flex-1">
      <div class="flex w-14 flex-col items-center"><svg class="h-[34px] w-14 shrink-0" viewBox="15 72 168 102"><path d="M58 160V108H82L90 116H124V160Z" fill="#f0d080" stroke="#9a7a28" stroke-width="3"/><path d="M58 161L80 122H139L124 161Z" fill="#ffeeb0" stroke="#b09030" stroke-width="3"/><path d="M93 98Q112 84 130 104" fill="none" stroke="#109030" stroke-width="6"/><path d="M138 94V112H118Z" fill="#109030"/></svg><span class="text-[11.5px] tracking-[-1px]">ﾌｧｲﾙを開く</span></div>
      <div class="flex w-[50px] flex-col items-center"><svg class="h-[34px] w-[50px] shrink-0" viewBox="183 72 150 102"><use href="#floppy" x="222" y="90" width="72" height="72"/></svg><span class="text-[11px]">保存</span></div>
      <div class="flex w-[77px] flex-col items-center border-l border-[#cdd3d9]"><svg class="h-[34px] w-[77px] shrink-0" viewBox="333 72 231 102"><use href="#page" x="414" y="87" width="56" height="72"/><use href="#floppy" x="436" y="121" width="38" height="42"/><use href="#pencil" x="448" y="126" width="40" height="42"/></svg><span class="text-[11px] tracking-[-1px]">名前を付けて保</span><span class="text-[11.5px]">存 - ﾒｲﾝﾌｧ...</span></div>
      <div class="flex w-[76px] flex-col items-center text-[#aeb4ba]"><svg class="h-[34px] w-[76px] shrink-0 opacity-30 grayscale" viewBox="564 72 228 102"><use href="#page" x="637" y="82" width="50" height="64"/><use href="#page" x="643" y="88" width="50" height="64"/><use href="#page" x="649" y="92" width="54" height="68"/><use href="#floppy" x="667" y="121" width="38" height="42"/><use href="#pencil" x="678" y="126" width="40" height="42"/></svg><span class="text-[11px] tracking-[-1px]">名前を付けて保</span><span class="text-[11px]">存 - 従属ﾌｧ...</span></div>
      <div class="flex w-[75px] flex-col items-center"><svg class="h-[34px] w-[75px] shrink-0" viewBox="792 72 225 102"><use href="#page" x="871" y="87" width="54" height="72"/><use href="#badge" x="872" y="92" width="28" height="28"/><use href="#floppy" x="892" y="121" width="38" height="42"/><use href="#pencil" x="903" y="126" width="40" height="42"/></svg><span class="text-[11.5px] tracking-[-0.9px]">ﾃﾝﾌﾟﾚｰﾄとして</span><span class="text-[11px]">保存</span></div>
      <div class="flex w-[54px] flex-col items-center"><svg class="h-[34px] w-[54px] shrink-0" viewBox="1017 72 162 102"><use href="#floppy" x="1088" y="93" width="40" height="40"/><path d="M1074 103H1119V148H1074Z" fill="#eff6fd"/><use href="#floppy" x="1077" y="105" width="40" height="40"/><path d="M1063 115H1107V159H1063Z" fill="#eff6fd"/><use href="#floppy" x="1065" y="117" width="40" height="40"/></svg><span class="text-[11px] tracking-[-1.4px]">すべて保存</span></div>
      <div class="flex w-[74px] flex-col items-center border-l border-[#cdd3d9]"><svg class="h-[34px] w-[74px] shrink-0" viewBox="1179 72 222 102"><use href="#page" x="1254" y="81" width="50" height="68"/><use href="#page" x="1261" y="88" width="50" height="68"/><use href="#page" x="1268" y="94" width="54" height="72"/><use href="#part" x="1270" y="116" width="36" height="24"/><path d="M1308 121H1327V139H1308ZM1317 121V139M1308 130H1327" fill="#fff" stroke="#222" stroke-width="3"/><use href="#asm" x="1302" y="140" width="32" height="28"/><use href="#nc" x="1272" y="142" width="28" height="26"/></svg><span class="tracking-[-0.2px]">ﾃﾝﾌﾟﾚｰﾄ管理</span></div>
    </div>
  </section>

  <section class="flex h-[84px] w-[463px] flex-col border border-[#7d9db6] bg-[#eff6fd]">
    <h2 class="flex h-5 shrink-0 items-center bg-linear-to-b from-[#8aa4b8] to-[#7397b3] pl-2 font-bold text-white"><svg class="mr-[13px] h-1 w-[7px]" viewBox="0 0 7 4"><path d="M0 4H7L3.500 0Z" fill="#fff"/></svg>ｲﾝﾎﾟｰﾄ</h2>
    <div class="flex flex-1">
      <div class="flex w-12 flex-col items-center"><svg class="h-[34px] w-12 shrink-0" viewBox="15 72 144 102"><use href="#page" x="59" y="90" width="56" height="72"/><use href="#gleft" x="82" y="116" width="42" height="38"/></svg>ｲﾝﾎﾟｰﾄ</div>
      <div class="flex w-[72px] flex-col items-center"><svg class="h-[34px] w-[72px] shrink-0" viewBox="159 72 216 102"><use href="#page" x="227" y="90" width="56" height="72"/><use href="#part" x="231" y="120" width="56" height="36"/><use href="#gleft" x="266" y="108" width="40" height="36"/></svg><span class="text-[11.5px] tracking-[-0.6px]">現在のﾌｧｲﾙへ</span><span>ｲﾝﾎﾟｰﾄ</span></div>
      <div class="flex w-[50px] flex-col items-center border-l border-[#cdd3d9]"><svg class="h-[34px] w-[50px] shrink-0" viewBox="375 72 150 102"><path d="M438 106H468M444 106V115" stroke="#e89030" stroke-width="7"/><circle cx="480" cy="107" r="11" fill="none" stroke="#e89030" stroke-width="7"/><use href="#gleft" x="408" y="107" width="38" height="38"/><path d="M448 133V151M488 133V151M450 142H486M457 136L450 142 457 148M479 136L486 142 479 148" fill="none" stroke="#111" stroke-width="3"/></svg>ﾊﾟﾗﾒﾄﾘｯ<br>ｸｲﾝﾎﾟｰﾄ</div>
      <div class="flex w-16 flex-col items-center"><svg class="h-[34px] w-16 shrink-0" viewBox="525 72 192 102"><use href="#page" x="600" y="90" width="58" height="72"/><use href="#badge" x="606" y="95" width="28" height="28"/><use href="#gleft" x="585" y="117" width="42" height="36" opacity=".75"/></svg><span class="tracking-[-0.8px]">ﾃﾝﾌﾟﾚｰﾄから</span></div>
      <div class="flex w-[73px] flex-col items-center"><svg class="h-[34px] w-[73px] shrink-0" viewBox="717 72 219 102"><use href="#part" x="818" y="89" width="44" height="29"/><use href="#gleft" x="792" y="108" width="38" height="36"/><use href="#asm" x="820" y="121" width="52" height="46"/></svg><span class="tracking-[-0.2px]">ﾊﾟｰﾂ/ｱｾﾝﾌﾞﾘ</span><span class="text-[11px] tracking-[-2px]">から</span></div>
      <div class="flex w-[76px] flex-col items-center border-l border-[#cdd3d9]"><svg class="h-[34px] w-[76px] shrink-0" viewBox="936 72 228 102"><path d="M1009 92H1077V134H1009Z" fill="#fff" stroke="#888" stroke-width="2"/><path d="M1008 91H1078V105H1008Z" fill="#18a0e8"/><path d="M1009 119H1077M1031 92V134M1054 92V134" stroke="#999" stroke-width="2"/><use href="#part" x="1034" y="122" width="58" height="38"/><use href="#gleft" x="1008" y="129" width="34" height="32" opacity=".75"/></svg><span class="text-[11.5px] tracking-[-0.6px]">ｶﾀﾛｸﾞから作成</span></div>
    </div>
  </section>

  <section class="flex h-[84px] w-[463px] flex-col border border-[#7d9db6] bg-[#eff6fd]">
    <h2 class="flex h-5 shrink-0 items-center bg-linear-to-b from-[#8aa4b8] to-[#7397b3] pl-2 font-bold text-white"><svg class="mr-[13px] h-1 w-[7px]" viewBox="0 0 7 4"><path d="M0 4H7L3.500 0Z" fill="#fff"/></svg>ｴｸｽﾎﾟｰﾄ</h2>
    <div class="flex flex-1">
      <div class="flex w-12 flex-col items-center"><svg class="h-[34px] w-12 shrink-0" viewBox="15 78 144 102"><use href="#page" x="48" y="96" width="56" height="72"/><use href="#bright" x="80" y="120" width="46" height="36"/></svg>ｴｸｽﾎﾟｰﾄ</div>
      <div class="flex w-[55px] flex-col items-center"><svg class="h-[34px] w-[55px] shrink-0" viewBox="159 78 165 102"><path d="M212 112Q222 142 242 112 262 88 278 136M214 132L252 94" fill="none" stroke="#555" stroke-width="3"/><circle cx="245" cy="100" r="5" fill="#20b020"/><circle cx="230" cy="118" r="5" fill="#20b020"/><path d="M262 112V140L268 134 274 146 279 143 274 132H281Z" fill="#111"/><use href="#bright" x="225" y="135" width="44" height="36"/></svg><span class="text-[11px] tracking-[-1.4px]">指定による</span><span>ｴｸｽﾎﾟｰﾄ</span></div>
      <div class="flex w-[76px] flex-col items-center border-l border-[#cdd3d9]"><svg class="h-[34px] w-[76px] shrink-0" viewBox="324 78 228 102"><use href="#part" x="402" y="114" width="68" height="44"/><path d="M455 93V125M439 109H471M443 98L467 120M467 98L443 120" stroke="#f0b818" stroke-width="4"/><circle cx="455" cy="109" r="8" fill="#ffe858"/><use href="#bright" x="399" y="138" width="44" height="36"/></svg><span class="tracking-[-0.3px]">ﾊﾟｰﾂへｴｸｽﾎﾟｰ<br>ﾄ</span></div>
      <div class="flex w-[74px] flex-col items-center"><svg class="h-[34px] w-[74px] shrink-0" viewBox="552 78 222 102"><path d="M638 100H698V158H638Z" fill="#fff" stroke="#111" stroke-width="4"/><path d="M646 106H670V130H646ZM652 112H664V124H652ZM680 106V130Q690 128 690 118 690 108 680 106ZM676 158V150H698" fill="none" stroke="#111" stroke-width="3"/><use href="#bright" x="630" y="135" width="46" height="36"/></svg><span class="tracking-[-0.6px]">製図へｴｸｽﾎﾟｰ<br>ﾄ</span></div>
      <div class="flex w-[74px] flex-col items-center"><svg class="h-[34px] w-[74px] shrink-0" viewBox="774 78 222 102"><use href="#nc" x="855" y="92" width="74" height="72"/><use href="#bright" x="846" y="138" width="46" height="36"/></svg><span class="tracking-[-0.6px]">NCへｴｸｽﾎﾟｰﾄ</span></div>
      <div class="flex w-[50px] flex-col items-center border-l border-[#cdd3d9]"><svg class="h-[34px] w-[50px] shrink-0" viewBox="996 78 150 102"><path d="M1048 94H1094L1111 110V168H1048Z" fill="#fafafa" stroke="#999" stroke-width="2"/><path d="M1094 94V110H1111Z" fill="#ccc"/><path d="M1056 162Q1080 148 1082 122M1082 122Q1084 148 1106 156M1062 158Q1084 146 1106 154" fill="none" stroke="#d01818" stroke-width="5"/><rect x="1032" y="94" width="56" height="25" fill="#9c1820"/><text x="1041" y="113" font-size="20" font-weight="bold" font-family="Liberation Sans" fill="#fff" textLength="38">PDF</text><use href="#bright" x="1023" y="128" width="44" height="34"/></svg><span class="text-[11.5px] tracking-[-0.4px]">PDF発行</span></div>
    </div>
  </section>

  <section class="flex h-[133px] w-[463px] flex-col border border-[#7d9db6] bg-[#eff6fd]">
    <h2 class="flex h-5 shrink-0 items-center bg-linear-to-b from-[#8aa4b8] to-[#7397b3] pl-2 font-bold text-white"><svg class="mr-[13px] h-1 w-[7px]" viewBox="0 0 7 4"><path d="M0 4H7L3.500 0Z" fill="#fff"/></svg>ﾌｧｲﾙﾂｰﾙ</h2>
    <div class="flex h-[62px] shrink-0">
      <div class="flex w-[55px] flex-col items-center"><svg class="h-[34px] w-[55px] shrink-0" viewBox="15 72 165 102"><path d="M53 90V162M53 92H74M53 130H74M53 160H74M90 100V112H106" fill="none" stroke="#555" stroke-width="2"/><path d="M48 87h9v9h-9zM48 126h9v9h-9zM48 156h9v9h-9z" fill="#111"/><use href="#asm" x="72" y="78" width="32" height="27"/><use href="#part" x="110" y="98" width="36" height="26"/><use href="#drawing" x="75" y="120" width="28" height="24"/><use href="#nc" x="75" y="146" width="28" height="27"/></svg><span class="text-[11.3px]">Cimatron</span><span>ｴｸｽﾌﾟﾛｰﾗ</span></div>
      <div class="flex w-[50px] flex-col items-center border-l border-[#cdd3d9]"><svg class="h-[34px] w-[50px] shrink-0" viewBox="180 72 150 102"><path d="M236 124L252 108H291V138L276 155H236Z" fill="#ffc830" stroke="#6a4c00" stroke-width="4"/><path d="M236 124H276V155M276 124L291 108M248 124L264 108M260 124L276 108" fill="none" stroke="#6a4c00" stroke-width="3"/><path d="M248 101Q222 102 224 124 228 140 246 142" fill="none" stroke="#1c50d0" stroke-width="6"/><path d="M242 132L258 143 242 152Z" fill="#1c50d0"/></svg><span class="text-[11px]">圧縮</span></div>
      <div class="flex w-[49px] flex-col items-center"><svg class="h-[34px] w-[49px] shrink-0" viewBox="330 72 147 102"><path d="M376 132H426V158H376Z" fill="#ffc830" stroke="#6a4c00" stroke-width="4"/><path d="M376 132L364 128 380 112H442L426 132Z" fill="#ffe080" stroke="#6a4c00" stroke-width="3"/><path d="M405 90L422 107H413V130H397V107H388Z" fill="#14b414"/></svg><span class="text-[11px]">解凍</span></div>
      <div class="flex w-[50px] flex-col items-center border-l border-[#cdd3d9]"><svg class="h-[34px] w-[50px] shrink-0" viewBox="477 72 150 102"><path d="M514 100H590V124H514Z" fill="#bbb" stroke="#555" stroke-width="3"/><path d="M520 124V154M584 124V154M515 155H527M578 155H590" stroke="#777" stroke-width="6"/><path d="M528 104H576V111H528Z" fill="#3070c0"/><path d="M532 112H572V140H532Z" fill="#fff" stroke="#4088d0" stroke-width="3"/><path d="M540 120H550V130H540ZM557 118V132Q566 130 564 122" fill="none" stroke="#2468a8" stroke-width="3"/></svg>ﾌﾟﾛｯﾄ</div>
      <div class="flex w-[72px] flex-col items-center border-l border-[#cdd3d9]"><svg class="h-[34px] w-[72px] shrink-0" viewBox="627 72 216 102"><use href="#page" x="693" y="84" width="56" height="74"/><use href="#glass" x="716" y="109" width="60" height="60"/></svg><span class="tracking-[-0.3px]">印刷ﾌﾟﾚﾋﾞｭｰ</span></div>
      <div class="flex w-[49px] flex-col items-center"><svg class="h-[34px] w-[49px] shrink-0" viewBox="843 72 147 102"><path d="M878 104H952V148H878Z" fill="#b8bec6" stroke="#667" stroke-width="3"/><path d="M895 88H934V122H895Z" fill="#fff" stroke="#889" stroke-width="3"/><path d="M884 122H946V130H884Z" fill="#556"/><path d="M896 136H934V161H896Z" fill="#fff" stroke="#667" stroke-width="3"/><path d="M902 145H928M902 153H928" stroke="#3070c0" stroke-width="3"/></svg><span class="text-[11px]">印刷</span></div>
      <div class="flex w-[60px] flex-col items-center border-l border-[#cdd3d9]"><svg class="h-[34px] w-[60px] shrink-0" viewBox="990 72 180 102"><path d="M1044 106Q1044 101 1050 101H1056L1062 94H1082L1088 101H1098Q1104 101 1104 106V140H1050Q1044 140 1044 134Z" fill="#444"/><circle cx="1074" cy="120" r="14" fill="#ddd"/><circle cx="1074" cy="120" r="8" fill="#5078e0"/><use href="#floppy" x="1077" y="120" width="39" height="39"/></svg><span class="tracking-[-0.3px]">ｲﾒｰｼﾞ保存</span></div>
      <div class="flex w-[50px] flex-col items-center"><svg class="h-[34px] w-[50px] shrink-0" viewBox="1170 72 150 102"><path d="M1206 122Q1206 116 1212 116H1218L1224 108H1246L1252 116H1260Q1266 116 1266 122V150Q1266 156 1260 156H1212Q1206 156 1206 150Z" fill="#444"/><circle cx="1237" cy="136" r="14" fill="#ddd"/><circle cx="1237" cy="136" r="9" fill="#6088e8"/><path d="M1274 94V121M1260 107H1287" stroke="#109020" stroke-width="8"/></svg><span class="text-[11px]">画像追加</span></div>
    </div>
    <div class="flex flex-1">
      <div class="flex w-[55px] flex-col items-center"><svg class="h-[34px] w-[55px] shrink-0" viewBox="15 258 165 102"><path d="M61 306H110V345H61Z" fill="#e8ecfa" stroke="#889" stroke-width="2"/><path d="M66 325h6M77 325h28M66 332h6M77 332h28M66 339h6M77 339h28" stroke="#3838e0" stroke-width="3"/><path d="M66 316L90 286 104 279H120V302L104 312 96 306 74 318Z" fill="#f4dfc4" stroke="#97836c" stroke-width="2"/><path d="M119 279H131V311H119Z" fill="#1c6030"/></svg>ﾌﾟﾛﾊﾟﾃｨ</div>
    </div>
  </section>

  <section class="flex h-[71px] w-[463px] flex-col border border-[#7d9db6] bg-[#eff6fd]">
    <h2 class="flex h-5 shrink-0 items-center bg-linear-to-b from-[#8aa4b8] to-[#7397b3] pl-2 font-bold text-white"><svg class="mr-[13px] h-1 w-[7px]" viewBox="0 0 7 4"><path d="M0 4H7L3.500 0Z" fill="#fff"/></svg>終了</h2>
    <div class="flex flex-1 text-[11px]">
      <div class="flex w-12 flex-col items-center"><svg class="h-[34px] w-12 shrink-0" viewBox="15 483 144 102"><path d="M80 500H122V560H80Z" fill="#b8ccf0" stroke="#1c3c80" stroke-width="3"/><path d="M58 559H128" stroke="#20a0f0" stroke-width="3"/><path d="M122 500V560L101 577V514Z" fill="#6c98f8" stroke="#1c3c80" stroke-width="3"/><path d="M60 528H74V519L91 534 74 549V541H60Z" fill="#000"/></svg>終了</div>
      <div class="flex w-[52px] flex-col items-center"><svg class="h-[34px] w-[52px] shrink-0" viewBox="159 483 156 102"><use href="#page" x="193" y="509" width="54" height="72"/><use href="#xbox" x="236" y="492" width="36" height="34"/></svg><span class="tracking-[-1.8px]">閉じる</span></div>
      <div class="flex w-14 flex-col items-center"><svg class="h-[34px] w-14 shrink-0" viewBox="315 483 168 102"><path d="M355 570V500H392M361 575V504H398" fill="none" stroke="#7d8fb0" stroke-width="3"/><use href="#page" x="366" y="507" width="58" height="74"/><use href="#xbox" x="404" y="492" width="36" height="34"/></svg><span class="tracking-[-2px]">すべて閉じる</span></div>
    </div>
  </section>
</div>

<!-- callout and pointer -->
<svg class="absolute top-0 left-0 h-[707px] w-[810px]" viewBox="0 0 810 707">
  <g fill="none" stroke="#ed1c24" stroke-width="5"><rect x="594.500" y="237.500" width="76" height="70"/><path d="M147 496.500L596 298M553 300.500L596 298 567 325.500" stroke-width="4.500" stroke-linecap="round"/></g>
  <path d="M337.500 12V28L341 25 344 31 347 29.500 344.500 24H349Z" fill="#fff" stroke="#222"/>
</svg>
</body>
</html>
